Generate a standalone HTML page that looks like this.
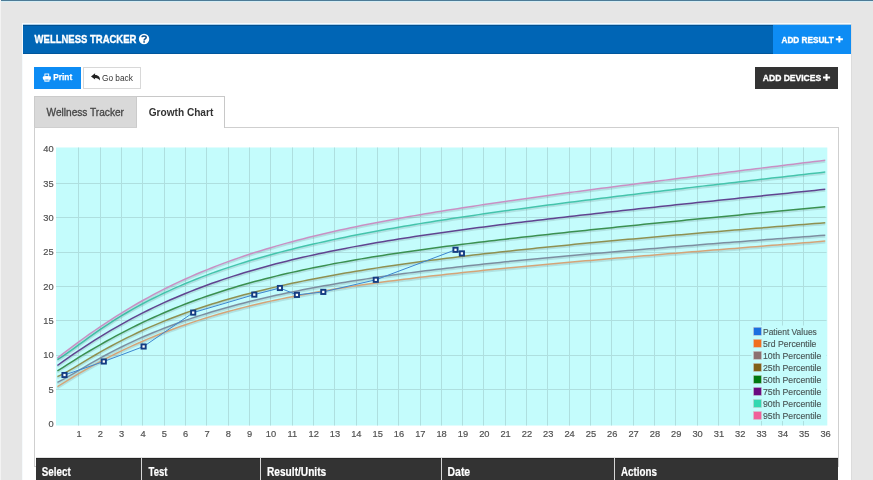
<!DOCTYPE html>
<html><head><meta charset="utf-8">
<style>
*{margin:0;padding:0;box-sizing:border-box}
html,body{width:873px;height:480px;overflow:hidden;background:#e6e6e6;font-family:"Liberation Sans",sans-serif}
.abs{position:absolute}
svg{will-change:transform}
#topline{left:0;top:0;width:873px;height:1px;background:#4d7b96}
#topline2{left:0;top:1px;width:873px;height:1px;background:#d5eef6}
#panel{left:23px;top:24px;width:828px;height:470px;background:#fff}
#hdr{left:23px;top:25px;width:828px;height:29px;background:#0065b5}
#addres{left:773px;top:25px;width:78px;height:29px;background:#0d8cf4}
.t{position:absolute;white-space:nowrap;line-height:1}
.btn{position:absolute}
#print{left:34px;top:67px;width:47px;height:22px;background:#0d8cf4}
#goback{left:83px;top:67px;width:58px;height:22px;background:#fff;border:1px solid #d8d8d8}
#adddev{left:755px;top:67px;width:83px;height:22px;background:#333}
#tab1{left:34px;top:96px;width:103px;height:31px;background:#d9d9d9;border:1px solid #cbcbcb;border-bottom:none}
#tab2{left:137px;top:96px;width:88px;height:32px;background:#fff;border:1px solid #c8c8c8;border-bottom:none;border-left:none}
#box{left:34px;top:127px;width:805px;height:340px;border:1px solid #cfcfcf;background:#fff}
#thead{left:36px;top:458px;width:802px;height:30px;background:#333}
.sep{position:absolute;top:458px;width:1px;height:22px;background:#d6d6d6}
</style></head><body>
<div class="abs" id="topline"></div><div class="abs" id="topline2"></div>
<div class="abs" style="left:0;top:0;width:1px;height:480px;background:#f3f3f3"></div>
<div class="abs" style="left:22px;top:23px;width:829px;height:458px;background:#f6fafc"></div>
<div class="abs" style="left:851px;top:24px;width:1px;height:456px;background:#dcdcdc"></div>
<div class="abs" id="panel"></div>
<div class="abs" id="hdr"></div>
<div class="abs" id="addres"></div>
<div class="abs" style="left:23px;top:24px;width:828px;height:1px;background:#a8cdea"></div>
<div class="abs" style="left:23px;top:25px;width:750px;height:1px;background:#004f90"></div>
<div class="abs" style="left:23px;top:53px;width:750px;height:1px;background:#00569c"></div>
<div class="btn" id="print"></div>
<div class="btn" id="goback"></div>
<div class="btn" id="adddev"></div>
<div class="abs" id="box"></div>
<div class="abs" id="tab1"></div>
<div class="abs" id="tab2"></div>
<svg class="abs" style="left:0;top:0" width="873" height="480">
<rect x="56" y="147.5" width="771.3" height="278" fill="#c4fcfc"/>
<path d="M78.50 147.5V425.5 M100.50 147.5V425.5 M121.50 147.5V425.5 M142.50 147.5V425.5 M164.50 147.5V425.5 M185.50 147.5V425.5 M206.50 147.5V425.5 M228.50 147.5V425.5 M249.50 147.5V425.5 M270.50 147.5V425.5 M292.50 147.5V425.5 M313.50 147.5V425.5 M334.50 147.5V425.5 M356.50 147.5V425.5 M377.50 147.5V425.5 M398.50 147.5V425.5 M420.50 147.5V425.5 M441.50 147.5V425.5 M462.50 147.5V425.5 M483.50 147.5V425.5 M505.50 147.5V425.5 M526.50 147.5V425.5 M547.50 147.5V425.5 M569.50 147.5V425.5 M590.50 147.5V425.5 M611.50 147.5V425.5 M633.50 147.5V425.5 M654.50 147.5V425.5 M675.50 147.5V425.5 M697.50 147.5V425.5 M718.50 147.5V425.5 M739.50 147.5V425.5 M761.50 147.5V425.5 M782.50 147.5V425.5 M803.50 147.5V425.5 M56 389.50H826.5 M56 355.50H826.5 M56 320.50H826.5 M56 286.50H826.5 M56 252.50H826.5 M56 217.50H826.5 M56 183.50H826.5" stroke="#aedfdf" stroke-width="1" fill="none"/>
<path d="M57.40 386.67 L62.73 383.33 L68.06 380.05 L73.40 376.83 L78.73 373.68 L84.06 370.59 L89.39 367.58 L94.73 364.63 L100.06 361.75 L105.39 358.94 L110.72 356.20 L116.06 353.53 L121.39 350.93 L126.72 348.40 L132.06 345.93 L137.39 343.53 L142.72 341.19 L148.05 338.91 L153.38 336.70 L158.72 334.55 L164.05 332.47 L169.38 330.44 L174.72 328.46 L180.05 326.55 L185.38 324.68 L190.71 322.87 L196.04 321.12 L201.38 319.41 L206.71 317.75 L212.04 316.14 L217.38 314.57 L222.71 313.05 L228.04 311.58 L233.37 310.14 L238.70 308.74 L244.04 307.39 L249.37 306.07 L254.70 304.78 L260.03 303.54 L265.37 302.32 L270.70 301.14 L276.03 299.99 L281.36 298.87 L286.70 297.78 L292.03 296.72 L297.36 295.68 L302.69 294.67 L308.03 293.69 L313.36 292.73 L318.69 291.79 L324.02 290.88 L329.36 289.99 L334.69 289.11 L340.02 288.26 L345.35 287.43 L350.69 286.61 L356.02 285.81 L361.35 285.03 L366.68 284.26 L372.02 283.51 L377.35 282.78 L382.68 282.05 L388.01 281.35 L393.35 280.65 L398.68 279.97 L404.01 279.30 L409.34 278.64 L414.68 277.99 L420.01 277.35 L425.34 276.72 L430.67 276.10 L436.01 275.49 L441.34 274.89 L446.67 274.30 L452.00 273.71 L457.34 273.14 L462.67 272.57 L468.00 272.00 L473.33 271.45 L478.67 270.90 L484.00 270.35 L489.33 269.81 L494.66 269.28 L500.00 268.75 L505.33 268.23 L510.66 267.71 L516.00 267.20 L521.33 266.69 L526.66 266.19 L531.99 265.69 L537.32 265.19 L542.66 264.70 L547.99 264.21 L553.32 263.72 L558.65 263.24 L563.99 262.76 L569.32 262.28 L574.65 261.81 L579.98 261.34 L585.32 260.87 L590.65 260.40 L595.98 259.94 L601.31 259.47 L606.65 259.01 L611.98 258.55 L617.31 258.10 L622.64 257.64 L627.98 257.19 L633.31 256.74 L638.64 256.29 L643.97 255.84 L649.31 255.39 L654.64 254.95 L659.97 254.50 L665.30 254.06 L670.64 253.62 L675.97 253.17 L681.30 252.73 L686.63 252.29 L691.97 251.86 L697.30 251.42 L702.63 250.98 L707.96 250.55 L713.30 250.11 L718.63 249.68 L723.96 249.24 L729.29 248.81 L734.63 248.38 L739.96 247.95 L745.29 247.52 L750.62 247.09 L755.96 246.66 L761.29 246.23 L766.62 245.80 L771.95 245.37 L777.29 244.94 L782.62 244.51 L787.95 244.09 L793.28 243.66 L798.62 243.23 L803.95 242.81 L809.28 242.38 L814.61 241.96 L819.95 241.53 L825.28 241.11" stroke="rgba(0,0,0,0.1)" stroke-width="2" fill="none" transform="translate(0,1.5)"/>
<path d="M57.40 386.67 L62.73 383.33 L68.06 380.05 L73.40 376.83 L78.73 373.68 L84.06 370.59 L89.39 367.58 L94.73 364.63 L100.06 361.75 L105.39 358.94 L110.72 356.20 L116.06 353.53 L121.39 350.93 L126.72 348.40 L132.06 345.93 L137.39 343.53 L142.72 341.19 L148.05 338.91 L153.38 336.70 L158.72 334.55 L164.05 332.47 L169.38 330.44 L174.72 328.46 L180.05 326.55 L185.38 324.68 L190.71 322.87 L196.04 321.12 L201.38 319.41 L206.71 317.75 L212.04 316.14 L217.38 314.57 L222.71 313.05 L228.04 311.58 L233.37 310.14 L238.70 308.74 L244.04 307.39 L249.37 306.07 L254.70 304.78 L260.03 303.54 L265.37 302.32 L270.70 301.14 L276.03 299.99 L281.36 298.87 L286.70 297.78 L292.03 296.72 L297.36 295.68 L302.69 294.67 L308.03 293.69 L313.36 292.73 L318.69 291.79 L324.02 290.88 L329.36 289.99 L334.69 289.11 L340.02 288.26 L345.35 287.43 L350.69 286.61 L356.02 285.81 L361.35 285.03 L366.68 284.26 L372.02 283.51 L377.35 282.78 L382.68 282.05 L388.01 281.35 L393.35 280.65 L398.68 279.97 L404.01 279.30 L409.34 278.64 L414.68 277.99 L420.01 277.35 L425.34 276.72 L430.67 276.10 L436.01 275.49 L441.34 274.89 L446.67 274.30 L452.00 273.71 L457.34 273.14 L462.67 272.57 L468.00 272.00 L473.33 271.45 L478.67 270.90 L484.00 270.35 L489.33 269.81 L494.66 269.28 L500.00 268.75 L505.33 268.23 L510.66 267.71 L516.00 267.20 L521.33 266.69 L526.66 266.19 L531.99 265.69 L537.32 265.19 L542.66 264.70 L547.99 264.21 L553.32 263.72 L558.65 263.24 L563.99 262.76 L569.32 262.28 L574.65 261.81 L579.98 261.34 L585.32 260.87 L590.65 260.40 L595.98 259.94 L601.31 259.47 L606.65 259.01 L611.98 258.55 L617.31 258.10 L622.64 257.64 L627.98 257.19 L633.31 256.74 L638.64 256.29 L643.97 255.84 L649.31 255.39 L654.64 254.95 L659.97 254.50 L665.30 254.06 L670.64 253.62 L675.97 253.17 L681.30 252.73 L686.63 252.29 L691.97 251.86 L697.30 251.42 L702.63 250.98 L707.96 250.55 L713.30 250.11 L718.63 249.68 L723.96 249.24 L729.29 248.81 L734.63 248.38 L739.96 247.95 L745.29 247.52 L750.62 247.09 L755.96 246.66 L761.29 246.23 L766.62 245.80 L771.95 245.37 L777.29 244.94 L782.62 244.51 L787.95 244.09 L793.28 243.66 L798.62 243.23 L803.95 242.81 L809.28 242.38 L814.61 241.96 L819.95 241.53 L825.28 241.11" stroke="#d4a478" stroke-width="1.5" fill="none"/>
<path d="M57.40 382.31 L62.73 379.61 L68.06 376.66 L73.40 373.58 L78.73 370.44 L84.06 367.31 L89.39 364.20 L94.73 361.15 L100.06 358.17 L105.39 355.26 L110.72 352.43 L116.06 349.67 L121.39 347.00 L126.72 344.40 L132.06 341.88 L137.39 339.43 L142.72 337.06 L148.05 334.76 L153.38 332.52 L158.72 330.35 L164.05 328.24 L169.38 326.20 L174.72 324.21 L180.05 322.29 L185.38 320.41 L190.71 318.59 L196.04 316.82 L201.38 315.10 L206.71 313.43 L212.04 311.81 L217.38 310.23 L222.71 308.69 L228.04 307.19 L233.37 305.73 L238.70 304.32 L244.04 302.93 L249.37 301.59 L254.70 300.28 L260.03 299.00 L265.37 297.75 L270.70 296.54 L276.03 295.35 L281.36 294.20 L286.70 293.07 L292.03 291.97 L297.36 290.89 L302.69 289.84 L308.03 288.81 L313.36 287.81 L318.69 286.82 L324.02 285.86 L329.36 284.92 L334.69 284.01 L340.02 283.11 L345.35 282.22 L350.69 281.36 L356.02 280.51 L361.35 279.68 L366.68 278.87 L372.02 278.07 L377.35 277.29 L382.68 276.52 L388.01 275.77 L393.35 275.03 L398.68 274.30 L404.01 273.58 L409.34 272.88 L414.68 272.19 L420.01 271.51 L425.34 270.84 L430.67 270.18 L436.01 269.53 L441.34 268.89 L446.67 268.26 L452.00 267.64 L457.34 267.03 L462.67 266.42 L468.00 265.83 L473.33 265.24 L478.67 264.66 L484.00 264.09 L489.33 263.52 L494.66 262.96 L500.00 262.41 L505.33 261.86 L510.66 261.32 L516.00 260.79 L521.33 260.26 L526.66 259.73 L531.99 259.22 L537.32 258.70 L542.66 258.19 L547.99 257.69 L553.32 257.19 L558.65 256.70 L563.99 256.21 L569.32 255.72 L574.65 255.24 L579.98 254.76 L585.32 254.28 L590.65 253.81 L595.98 253.34 L601.31 252.88 L606.65 252.42 L611.98 251.96 L617.31 251.50 L622.64 251.05 L627.98 250.60 L633.31 250.15 L638.64 249.71 L643.97 249.27 L649.31 248.83 L654.64 248.39 L659.97 247.95 L665.30 247.52 L670.64 247.09 L675.97 246.66 L681.30 246.23 L686.63 245.81 L691.97 245.38 L697.30 244.96 L702.63 244.54 L707.96 244.12 L713.30 243.70 L718.63 243.29 L723.96 242.87 L729.29 242.46 L734.63 242.05 L739.96 241.64 L745.29 241.23 L750.62 240.82 L755.96 240.41 L761.29 240.01 L766.62 239.60 L771.95 239.20 L777.29 238.80 L782.62 238.40 L787.95 237.99 L793.28 237.59 L798.62 237.20 L803.95 236.80 L809.28 236.40 L814.61 236.00 L819.95 235.61 L825.28 235.21" stroke="rgba(0,0,0,0.1)" stroke-width="2" fill="none" transform="translate(0,1.5)"/>
<path d="M57.40 382.31 L62.73 379.61 L68.06 376.66 L73.40 373.58 L78.73 370.44 L84.06 367.31 L89.39 364.20 L94.73 361.15 L100.06 358.17 L105.39 355.26 L110.72 352.43 L116.06 349.67 L121.39 347.00 L126.72 344.40 L132.06 341.88 L137.39 339.43 L142.72 337.06 L148.05 334.76 L153.38 332.52 L158.72 330.35 L164.05 328.24 L169.38 326.20 L174.72 324.21 L180.05 322.29 L185.38 320.41 L190.71 318.59 L196.04 316.82 L201.38 315.10 L206.71 313.43 L212.04 311.81 L217.38 310.23 L222.71 308.69 L228.04 307.19 L233.37 305.73 L238.70 304.32 L244.04 302.93 L249.37 301.59 L254.70 300.28 L260.03 299.00 L265.37 297.75 L270.70 296.54 L276.03 295.35 L281.36 294.20 L286.70 293.07 L292.03 291.97 L297.36 290.89 L302.69 289.84 L308.03 288.81 L313.36 287.81 L318.69 286.82 L324.02 285.86 L329.36 284.92 L334.69 284.01 L340.02 283.11 L345.35 282.22 L350.69 281.36 L356.02 280.51 L361.35 279.68 L366.68 278.87 L372.02 278.07 L377.35 277.29 L382.68 276.52 L388.01 275.77 L393.35 275.03 L398.68 274.30 L404.01 273.58 L409.34 272.88 L414.68 272.19 L420.01 271.51 L425.34 270.84 L430.67 270.18 L436.01 269.53 L441.34 268.89 L446.67 268.26 L452.00 267.64 L457.34 267.03 L462.67 266.42 L468.00 265.83 L473.33 265.24 L478.67 264.66 L484.00 264.09 L489.33 263.52 L494.66 262.96 L500.00 262.41 L505.33 261.86 L510.66 261.32 L516.00 260.79 L521.33 260.26 L526.66 259.73 L531.99 259.22 L537.32 258.70 L542.66 258.19 L547.99 257.69 L553.32 257.19 L558.65 256.70 L563.99 256.21 L569.32 255.72 L574.65 255.24 L579.98 254.76 L585.32 254.28 L590.65 253.81 L595.98 253.34 L601.31 252.88 L606.65 252.42 L611.98 251.96 L617.31 251.50 L622.64 251.05 L627.98 250.60 L633.31 250.15 L638.64 249.71 L643.97 249.27 L649.31 248.83 L654.64 248.39 L659.97 247.95 L665.30 247.52 L670.64 247.09 L675.97 246.66 L681.30 246.23 L686.63 245.81 L691.97 245.38 L697.30 244.96 L702.63 244.54 L707.96 244.12 L713.30 243.70 L718.63 243.29 L723.96 242.87 L729.29 242.46 L734.63 242.05 L739.96 241.64 L745.29 241.23 L750.62 240.82 L755.96 240.41 L761.29 240.01 L766.62 239.60 L771.95 239.20 L777.29 238.80 L782.62 238.40 L787.95 237.99 L793.28 237.59 L798.62 237.20 L803.95 236.80 L809.28 236.40 L814.61 236.00 L819.95 235.61 L825.28 235.21" stroke="#7c8ea0" stroke-width="1.5" fill="none"/>
<path d="M57.40 376.67 L62.73 374.10 L68.06 371.16 L73.40 368.04 L78.73 364.83 L84.06 361.60 L89.39 358.40 L94.73 355.25 L100.06 352.16 L105.39 349.15 L110.72 346.22 L116.06 343.37 L121.39 340.60 L126.72 337.91 L132.06 335.30 L137.39 332.76 L142.72 330.30 L148.05 327.92 L153.38 325.60 L158.72 323.35 L164.05 321.16 L169.38 319.04 L174.72 316.98 L180.05 314.98 L185.38 313.03 L190.71 311.14 L196.04 309.30 L201.38 307.51 L206.71 305.77 L212.04 304.08 L217.38 302.43 L222.71 300.83 L228.04 299.27 L233.37 297.75 L238.70 296.26 L244.04 294.82 L249.37 293.42 L254.70 292.05 L260.03 290.71 L265.37 289.41 L270.70 288.13 L276.03 286.89 L281.36 285.68 L286.70 284.50 L292.03 283.34 L297.36 282.21 L302.69 281.11 L308.03 280.03 L313.36 278.97 L318.69 277.94 L324.02 276.93 L329.36 275.94 L334.69 274.97 L340.02 274.03 L345.35 273.10 L350.69 272.18 L356.02 271.29 L361.35 270.42 L366.68 269.56 L372.02 268.71 L377.35 267.88 L382.68 267.07 L388.01 266.27 L393.35 265.49 L398.68 264.72 L404.01 263.96 L409.34 263.21 L414.68 262.48 L420.01 261.75 L425.34 261.04 L430.67 260.34 L436.01 259.65 L441.34 258.97 L446.67 258.30 L452.00 257.64 L457.34 256.99 L462.67 256.34 L468.00 255.71 L473.33 255.08 L478.67 254.46 L484.00 253.85 L489.33 253.24 L494.66 252.64 L500.00 252.05 L505.33 251.47 L510.66 250.89 L516.00 250.31 L521.33 249.75 L526.66 249.19 L531.99 248.63 L537.32 248.08 L542.66 247.53 L547.99 246.99 L553.32 246.46 L558.65 245.93 L563.99 245.40 L569.32 244.88 L574.65 244.36 L579.98 243.84 L585.32 243.33 L590.65 242.82 L595.98 242.32 L601.31 241.82 L606.65 241.32 L611.98 240.83 L617.31 240.34 L622.64 239.85 L627.98 239.36 L633.31 238.88 L638.64 238.40 L643.97 237.92 L649.31 237.45 L654.64 236.97 L659.97 236.50 L665.30 236.03 L670.64 235.57 L675.97 235.10 L681.30 234.64 L686.63 234.18 L691.97 233.72 L697.30 233.27 L702.63 232.81 L707.96 232.36 L713.30 231.91 L718.63 231.46 L723.96 231.01 L729.29 230.56 L734.63 230.11 L739.96 229.67 L745.29 229.22 L750.62 228.78 L755.96 228.34 L761.29 227.90 L766.62 227.46 L771.95 227.03 L777.29 226.59 L782.62 226.15 L787.95 225.72 L793.28 225.28 L798.62 224.85 L803.95 224.42 L809.28 223.99 L814.61 223.56 L819.95 223.13 L825.28 222.70" stroke="rgba(0,0,0,0.1)" stroke-width="2" fill="none" transform="translate(0,1.5)"/>
<path d="M57.40 376.67 L62.73 374.10 L68.06 371.16 L73.40 368.04 L78.73 364.83 L84.06 361.60 L89.39 358.40 L94.73 355.25 L100.06 352.16 L105.39 349.15 L110.72 346.22 L116.06 343.37 L121.39 340.60 L126.72 337.91 L132.06 335.30 L137.39 332.76 L142.72 330.30 L148.05 327.92 L153.38 325.60 L158.72 323.35 L164.05 321.16 L169.38 319.04 L174.72 316.98 L180.05 314.98 L185.38 313.03 L190.71 311.14 L196.04 309.30 L201.38 307.51 L206.71 305.77 L212.04 304.08 L217.38 302.43 L222.71 300.83 L228.04 299.27 L233.37 297.75 L238.70 296.26 L244.04 294.82 L249.37 293.42 L254.70 292.05 L260.03 290.71 L265.37 289.41 L270.70 288.13 L276.03 286.89 L281.36 285.68 L286.70 284.50 L292.03 283.34 L297.36 282.21 L302.69 281.11 L308.03 280.03 L313.36 278.97 L318.69 277.94 L324.02 276.93 L329.36 275.94 L334.69 274.97 L340.02 274.03 L345.35 273.10 L350.69 272.18 L356.02 271.29 L361.35 270.42 L366.68 269.56 L372.02 268.71 L377.35 267.88 L382.68 267.07 L388.01 266.27 L393.35 265.49 L398.68 264.72 L404.01 263.96 L409.34 263.21 L414.68 262.48 L420.01 261.75 L425.34 261.04 L430.67 260.34 L436.01 259.65 L441.34 258.97 L446.67 258.30 L452.00 257.64 L457.34 256.99 L462.67 256.34 L468.00 255.71 L473.33 255.08 L478.67 254.46 L484.00 253.85 L489.33 253.24 L494.66 252.64 L500.00 252.05 L505.33 251.47 L510.66 250.89 L516.00 250.31 L521.33 249.75 L526.66 249.19 L531.99 248.63 L537.32 248.08 L542.66 247.53 L547.99 246.99 L553.32 246.46 L558.65 245.93 L563.99 245.40 L569.32 244.88 L574.65 244.36 L579.98 243.84 L585.32 243.33 L590.65 242.82 L595.98 242.32 L601.31 241.82 L606.65 241.32 L611.98 240.83 L617.31 240.34 L622.64 239.85 L627.98 239.36 L633.31 238.88 L638.64 238.40 L643.97 237.92 L649.31 237.45 L654.64 236.97 L659.97 236.50 L665.30 236.03 L670.64 235.57 L675.97 235.10 L681.30 234.64 L686.63 234.18 L691.97 233.72 L697.30 233.27 L702.63 232.81 L707.96 232.36 L713.30 231.91 L718.63 231.46 L723.96 231.01 L729.29 230.56 L734.63 230.11 L739.96 229.67 L745.29 229.22 L750.62 228.78 L755.96 228.34 L761.29 227.90 L766.62 227.46 L771.95 227.03 L777.29 226.59 L782.62 226.15 L787.95 225.72 L793.28 225.28 L798.62 224.85 L803.95 224.42 L809.28 223.99 L814.61 223.56 L819.95 223.13 L825.28 222.70" stroke="#8e9050" stroke-width="1.5" fill="none"/>
<path d="M57.40 370.98 L62.73 367.53 L68.06 364.13 L73.40 360.78 L78.73 357.47 L84.06 354.21 L89.39 351.01 L94.73 347.87 L100.06 344.78 L105.39 341.76 L110.72 338.80 L116.06 335.91 L121.39 333.07 L126.72 330.31 L132.06 327.61 L137.39 324.97 L142.72 322.40 L148.05 319.89 L153.38 317.45 L158.72 315.07 L164.05 312.75 L169.38 310.49 L174.72 308.29 L180.05 306.15 L185.38 304.06 L190.71 302.03 L196.04 300.06 L201.38 298.14 L206.71 296.28 L212.04 294.46 L217.38 292.69 L222.71 290.97 L228.04 289.30 L233.37 287.67 L238.70 286.09 L244.04 284.55 L249.37 283.05 L254.70 281.59 L260.03 280.16 L265.37 278.78 L270.70 277.43 L276.03 276.11 L281.36 274.83 L286.70 273.58 L292.03 272.37 L297.36 271.18 L302.69 270.02 L308.03 268.89 L313.36 267.78 L318.69 266.70 L324.02 265.65 L329.36 264.62 L334.69 263.61 L340.02 262.62 L345.35 261.66 L350.69 260.71 L356.02 259.78 L361.35 258.88 L366.68 257.99 L372.02 257.11 L377.35 256.26 L382.68 255.42 L388.01 254.59 L393.35 253.78 L398.68 252.98 L404.01 252.20 L409.34 251.43 L414.68 250.67 L420.01 249.92 L425.34 249.18 L430.67 248.46 L436.01 247.74 L441.34 247.03 L446.67 246.34 L452.00 245.65 L457.34 244.97 L462.67 244.29 L468.00 243.63 L473.33 242.97 L478.67 242.32 L484.00 241.68 L489.33 241.04 L494.66 240.41 L500.00 239.79 L505.33 239.17 L510.66 238.55 L516.00 237.94 L521.33 237.34 L526.66 236.74 L531.99 236.15 L537.32 235.55 L542.66 234.97 L547.99 234.38 L553.32 233.80 L558.65 233.23 L563.99 232.66 L569.32 232.09 L574.65 231.52 L579.98 230.96 L585.32 230.40 L590.65 229.84 L595.98 229.28 L601.31 228.73 L606.65 228.18 L611.98 227.63 L617.31 227.08 L622.64 226.53 L627.98 225.99 L633.31 225.45 L638.64 224.91 L643.97 224.37 L649.31 223.83 L654.64 223.30 L659.97 222.76 L665.30 222.23 L670.64 221.70 L675.97 221.17 L681.30 220.64 L686.63 220.11 L691.97 219.59 L697.30 219.06 L702.63 218.53 L707.96 218.01 L713.30 217.49 L718.63 216.96 L723.96 216.44 L729.29 215.92 L734.63 215.40 L739.96 214.88 L745.29 214.36 L750.62 213.84 L755.96 213.32 L761.29 212.81 L766.62 212.29 L771.95 211.77 L777.29 211.25 L782.62 210.74 L787.95 210.22 L793.28 209.71 L798.62 209.19 L803.95 208.68 L809.28 208.17 L814.61 207.65 L819.95 207.14 L825.28 206.63" stroke="rgba(0,0,0,0.1)" stroke-width="2" fill="none" transform="translate(0,1.5)"/>
<path d="M57.40 370.98 L62.73 367.53 L68.06 364.13 L73.40 360.78 L78.73 357.47 L84.06 354.21 L89.39 351.01 L94.73 347.87 L100.06 344.78 L105.39 341.76 L110.72 338.80 L116.06 335.91 L121.39 333.07 L126.72 330.31 L132.06 327.61 L137.39 324.97 L142.72 322.40 L148.05 319.89 L153.38 317.45 L158.72 315.07 L164.05 312.75 L169.38 310.49 L174.72 308.29 L180.05 306.15 L185.38 304.06 L190.71 302.03 L196.04 300.06 L201.38 298.14 L206.71 296.28 L212.04 294.46 L217.38 292.69 L222.71 290.97 L228.04 289.30 L233.37 287.67 L238.70 286.09 L244.04 284.55 L249.37 283.05 L254.70 281.59 L260.03 280.16 L265.37 278.78 L270.70 277.43 L276.03 276.11 L281.36 274.83 L286.70 273.58 L292.03 272.37 L297.36 271.18 L302.69 270.02 L308.03 268.89 L313.36 267.78 L318.69 266.70 L324.02 265.65 L329.36 264.62 L334.69 263.61 L340.02 262.62 L345.35 261.66 L350.69 260.71 L356.02 259.78 L361.35 258.88 L366.68 257.99 L372.02 257.11 L377.35 256.26 L382.68 255.42 L388.01 254.59 L393.35 253.78 L398.68 252.98 L404.01 252.20 L409.34 251.43 L414.68 250.67 L420.01 249.92 L425.34 249.18 L430.67 248.46 L436.01 247.74 L441.34 247.03 L446.67 246.34 L452.00 245.65 L457.34 244.97 L462.67 244.29 L468.00 243.63 L473.33 242.97 L478.67 242.32 L484.00 241.68 L489.33 241.04 L494.66 240.41 L500.00 239.79 L505.33 239.17 L510.66 238.55 L516.00 237.94 L521.33 237.34 L526.66 236.74 L531.99 236.15 L537.32 235.55 L542.66 234.97 L547.99 234.38 L553.32 233.80 L558.65 233.23 L563.99 232.66 L569.32 232.09 L574.65 231.52 L579.98 230.96 L585.32 230.40 L590.65 229.84 L595.98 229.28 L601.31 228.73 L606.65 228.18 L611.98 227.63 L617.31 227.08 L622.64 226.53 L627.98 225.99 L633.31 225.45 L638.64 224.91 L643.97 224.37 L649.31 223.83 L654.64 223.30 L659.97 222.76 L665.30 222.23 L670.64 221.70 L675.97 221.17 L681.30 220.64 L686.63 220.11 L691.97 219.59 L697.30 219.06 L702.63 218.53 L707.96 218.01 L713.30 217.49 L718.63 216.96 L723.96 216.44 L729.29 215.92 L734.63 215.40 L739.96 214.88 L745.29 214.36 L750.62 213.84 L755.96 213.32 L761.29 212.81 L766.62 212.29 L771.95 211.77 L777.29 211.25 L782.62 210.74 L787.95 210.22 L793.28 209.71 L798.62 209.19 L803.95 208.68 L809.28 208.17 L814.61 207.65 L819.95 207.14 L825.28 206.63" stroke="#3a9050" stroke-width="1.5" fill="none"/>
<path d="M57.40 365.50 L62.73 361.68 L68.06 357.91 L73.40 354.22 L78.73 350.60 L84.06 347.05 L89.39 343.57 L94.73 340.17 L100.06 336.84 L105.39 333.59 L110.72 330.42 L116.06 327.32 L121.39 324.29 L126.72 321.34 L132.06 318.46 L137.39 315.66 L142.72 312.92 L148.05 310.26 L153.38 307.67 L158.72 305.14 L164.05 302.68 L169.38 300.29 L174.72 297.96 L180.05 295.69 L185.38 293.49 L190.71 291.34 L196.04 289.25 L201.38 287.22 L206.71 285.24 L212.04 283.32 L217.38 281.45 L222.71 279.63 L228.04 277.85 L233.37 276.13 L238.70 274.45 L244.04 272.81 L249.37 271.22 L254.70 269.67 L260.03 268.16 L265.37 266.68 L270.70 265.25 L276.03 263.85 L281.36 262.48 L286.70 261.15 L292.03 259.85 L297.36 258.58 L302.69 257.34 L308.03 256.14 L313.36 254.95 L318.69 253.80 L324.02 252.67 L329.36 251.57 L334.69 250.49 L340.02 249.43 L345.35 248.39 L350.69 247.38 L356.02 246.38 L361.35 245.41 L366.68 244.45 L372.02 243.52 L377.35 242.59 L382.68 241.69 L388.01 240.80 L393.35 239.93 L398.68 239.07 L404.01 238.23 L409.34 237.39 L414.68 236.58 L420.01 235.77 L425.34 234.98 L430.67 234.19 L436.01 233.42 L441.34 232.66 L446.67 231.91 L452.00 231.17 L457.34 230.43 L462.67 229.71 L468.00 228.99 L473.33 228.28 L478.67 227.58 L484.00 226.89 L489.33 226.20 L494.66 225.52 L500.00 224.85 L505.33 224.18 L510.66 223.52 L516.00 222.86 L521.33 222.21 L526.66 221.57 L531.99 220.93 L537.32 220.29 L542.66 219.66 L547.99 219.03 L553.32 218.41 L558.65 217.79 L563.99 217.17 L569.32 216.56 L574.65 215.95 L579.98 215.35 L585.32 214.74 L590.65 214.14 L595.98 213.55 L601.31 212.95 L606.65 212.36 L611.98 211.77 L617.31 211.18 L622.64 210.60 L627.98 210.02 L633.31 209.44 L638.64 208.86 L643.97 208.28 L649.31 207.70 L654.64 207.13 L659.97 206.56 L665.30 205.99 L670.64 205.42 L675.97 204.85 L681.30 204.28 L686.63 203.72 L691.97 203.15 L697.30 202.59 L702.63 202.03 L707.96 201.47 L713.30 200.91 L718.63 200.35 L723.96 199.79 L729.29 199.23 L734.63 198.68 L739.96 198.12 L745.29 197.57 L750.62 197.01 L755.96 196.46 L761.29 195.91 L766.62 195.35 L771.95 194.80 L777.29 194.25 L782.62 193.70 L787.95 193.15 L793.28 192.60 L798.62 192.05 L803.95 191.50 L809.28 190.95 L814.61 190.41 L819.95 189.86 L825.28 189.31" stroke="rgba(0,0,0,0.1)" stroke-width="2" fill="none" transform="translate(0,1.5)"/>
<path d="M57.40 365.50 L62.73 361.68 L68.06 357.91 L73.40 354.22 L78.73 350.60 L84.06 347.05 L89.39 343.57 L94.73 340.17 L100.06 336.84 L105.39 333.59 L110.72 330.42 L116.06 327.32 L121.39 324.29 L126.72 321.34 L132.06 318.46 L137.39 315.66 L142.72 312.92 L148.05 310.26 L153.38 307.67 L158.72 305.14 L164.05 302.68 L169.38 300.29 L174.72 297.96 L180.05 295.69 L185.38 293.49 L190.71 291.34 L196.04 289.25 L201.38 287.22 L206.71 285.24 L212.04 283.32 L217.38 281.45 L222.71 279.63 L228.04 277.85 L233.37 276.13 L238.70 274.45 L244.04 272.81 L249.37 271.22 L254.70 269.67 L260.03 268.16 L265.37 266.68 L270.70 265.25 L276.03 263.85 L281.36 262.48 L286.70 261.15 L292.03 259.85 L297.36 258.58 L302.69 257.34 L308.03 256.14 L313.36 254.95 L318.69 253.80 L324.02 252.67 L329.36 251.57 L334.69 250.49 L340.02 249.43 L345.35 248.39 L350.69 247.38 L356.02 246.38 L361.35 245.41 L366.68 244.45 L372.02 243.52 L377.35 242.59 L382.68 241.69 L388.01 240.80 L393.35 239.93 L398.68 239.07 L404.01 238.23 L409.34 237.39 L414.68 236.58 L420.01 235.77 L425.34 234.98 L430.67 234.19 L436.01 233.42 L441.34 232.66 L446.67 231.91 L452.00 231.17 L457.34 230.43 L462.67 229.71 L468.00 228.99 L473.33 228.28 L478.67 227.58 L484.00 226.89 L489.33 226.20 L494.66 225.52 L500.00 224.85 L505.33 224.18 L510.66 223.52 L516.00 222.86 L521.33 222.21 L526.66 221.57 L531.99 220.93 L537.32 220.29 L542.66 219.66 L547.99 219.03 L553.32 218.41 L558.65 217.79 L563.99 217.17 L569.32 216.56 L574.65 215.95 L579.98 215.35 L585.32 214.74 L590.65 214.14 L595.98 213.55 L601.31 212.95 L606.65 212.36 L611.98 211.77 L617.31 211.18 L622.64 210.60 L627.98 210.02 L633.31 209.44 L638.64 208.86 L643.97 208.28 L649.31 207.70 L654.64 207.13 L659.97 206.56 L665.30 205.99 L670.64 205.42 L675.97 204.85 L681.30 204.28 L686.63 203.72 L691.97 203.15 L697.30 202.59 L702.63 202.03 L707.96 201.47 L713.30 200.91 L718.63 200.35 L723.96 199.79 L729.29 199.23 L734.63 198.68 L739.96 198.12 L745.29 197.57 L750.62 197.01 L755.96 196.46 L761.29 195.91 L766.62 195.35 L771.95 194.80 L777.29 194.25 L782.62 193.70 L787.95 193.15 L793.28 192.60 L798.62 192.05 L803.95 191.50 L809.28 190.95 L814.61 190.41 L819.95 189.86 L825.28 189.31" stroke="#604490" stroke-width="1.5" fill="none"/>
<path d="M57.40 359.73 L62.73 356.36 L68.06 352.68 L73.40 348.83 L78.73 344.92 L84.06 341.02 L89.39 337.17 L94.73 333.38 L100.06 329.69 L105.39 326.10 L110.72 322.60 L116.06 319.21 L121.39 315.93 L126.72 312.74 L132.06 309.66 L137.39 306.67 L142.72 303.77 L148.05 300.96 L153.38 298.24 L158.72 295.60 L164.05 293.05 L169.38 290.57 L174.72 288.16 L180.05 285.83 L185.38 283.56 L190.71 281.36 L196.04 279.22 L201.38 277.15 L206.71 275.13 L212.04 273.17 L217.38 271.26 L222.71 269.40 L228.04 267.59 L233.37 265.84 L238.70 264.12 L244.04 262.45 L249.37 260.83 L254.70 259.24 L260.03 257.70 L265.37 256.19 L270.70 254.71 L276.03 253.28 L281.36 251.87 L286.70 250.50 L292.03 249.15 L297.36 247.84 L302.69 246.56 L308.03 245.30 L313.36 244.07 L318.69 242.86 L324.02 241.68 L329.36 240.52 L334.69 239.39 L340.02 238.27 L345.35 237.18 L350.69 236.11 L356.02 235.05 L361.35 234.01 L366.68 232.99 L372.02 231.99 L377.35 231.00 L382.68 230.03 L388.01 229.08 L393.35 228.14 L398.68 227.21 L404.01 226.29 L409.34 225.39 L414.68 224.50 L420.01 223.62 L425.34 222.76 L430.67 221.90 L436.01 221.06 L441.34 220.22 L446.67 219.40 L452.00 218.58 L457.34 217.77 L462.67 216.97 L468.00 216.18 L473.33 215.40 L478.67 214.62 L484.00 213.85 L489.33 213.09 L494.66 212.34 L500.00 211.59 L505.33 210.85 L510.66 210.11 L516.00 209.38 L521.33 208.66 L526.66 207.94 L531.99 207.22 L537.32 206.51 L542.66 205.81 L547.99 205.11 L553.32 204.41 L558.65 203.72 L563.99 203.03 L569.32 202.35 L574.65 201.67 L579.98 200.99 L585.32 200.32 L590.65 199.65 L595.98 198.98 L601.31 198.32 L606.65 197.65 L611.98 197.00 L617.31 196.34 L622.64 195.69 L627.98 195.04 L633.31 194.39 L638.64 193.74 L643.97 193.10 L649.31 192.45 L654.64 191.81 L659.97 191.18 L665.30 190.54 L670.64 189.91 L675.97 189.27 L681.30 188.64 L686.63 188.01 L691.97 187.38 L697.30 186.76 L702.63 186.13 L707.96 185.51 L713.30 184.89 L718.63 184.27 L723.96 183.65 L729.29 183.03 L734.63 182.41 L739.96 181.79 L745.29 181.18 L750.62 180.56 L755.96 179.95 L761.29 179.34 L766.62 178.72 L771.95 178.11 L777.29 177.50 L782.62 176.89 L787.95 176.28 L793.28 175.68 L798.62 175.07 L803.95 174.46 L809.28 173.86 L814.61 173.25 L819.95 172.64 L825.28 172.04" stroke="rgba(0,0,0,0.1)" stroke-width="2" fill="none" transform="translate(0,1.5)"/>
<path d="M57.40 359.73 L62.73 356.36 L68.06 352.68 L73.40 348.83 L78.73 344.92 L84.06 341.02 L89.39 337.17 L94.73 333.38 L100.06 329.69 L105.39 326.10 L110.72 322.60 L116.06 319.21 L121.39 315.93 L126.72 312.74 L132.06 309.66 L137.39 306.67 L142.72 303.77 L148.05 300.96 L153.38 298.24 L158.72 295.60 L164.05 293.05 L169.38 290.57 L174.72 288.16 L180.05 285.83 L185.38 283.56 L190.71 281.36 L196.04 279.22 L201.38 277.15 L206.71 275.13 L212.04 273.17 L217.38 271.26 L222.71 269.40 L228.04 267.59 L233.37 265.84 L238.70 264.12 L244.04 262.45 L249.37 260.83 L254.70 259.24 L260.03 257.70 L265.37 256.19 L270.70 254.71 L276.03 253.28 L281.36 251.87 L286.70 250.50 L292.03 249.15 L297.36 247.84 L302.69 246.56 L308.03 245.30 L313.36 244.07 L318.69 242.86 L324.02 241.68 L329.36 240.52 L334.69 239.39 L340.02 238.27 L345.35 237.18 L350.69 236.11 L356.02 235.05 L361.35 234.01 L366.68 232.99 L372.02 231.99 L377.35 231.00 L382.68 230.03 L388.01 229.08 L393.35 228.14 L398.68 227.21 L404.01 226.29 L409.34 225.39 L414.68 224.50 L420.01 223.62 L425.34 222.76 L430.67 221.90 L436.01 221.06 L441.34 220.22 L446.67 219.40 L452.00 218.58 L457.34 217.77 L462.67 216.97 L468.00 216.18 L473.33 215.40 L478.67 214.62 L484.00 213.85 L489.33 213.09 L494.66 212.34 L500.00 211.59 L505.33 210.85 L510.66 210.11 L516.00 209.38 L521.33 208.66 L526.66 207.94 L531.99 207.22 L537.32 206.51 L542.66 205.81 L547.99 205.11 L553.32 204.41 L558.65 203.72 L563.99 203.03 L569.32 202.35 L574.65 201.67 L579.98 200.99 L585.32 200.32 L590.65 199.65 L595.98 198.98 L601.31 198.32 L606.65 197.65 L611.98 197.00 L617.31 196.34 L622.64 195.69 L627.98 195.04 L633.31 194.39 L638.64 193.74 L643.97 193.10 L649.31 192.45 L654.64 191.81 L659.97 191.18 L665.30 190.54 L670.64 189.91 L675.97 189.27 L681.30 188.64 L686.63 188.01 L691.97 187.38 L697.30 186.76 L702.63 186.13 L707.96 185.51 L713.30 184.89 L718.63 184.27 L723.96 183.65 L729.29 183.03 L734.63 182.41 L739.96 181.79 L745.29 181.18 L750.62 180.56 L755.96 179.95 L761.29 179.34 L766.62 178.72 L771.95 178.11 L777.29 177.50 L782.62 176.89 L787.95 176.28 L793.28 175.68 L798.62 175.07 L803.95 174.46 L809.28 173.86 L814.61 173.25 L819.95 172.64 L825.28 172.04" stroke="#44c4ac" stroke-width="1.5" fill="none"/>
<path d="M57.40 357.99 L62.73 353.87 L68.06 349.81 L73.40 345.81 L78.73 341.88 L84.06 338.01 L89.39 334.22 L94.73 330.50 L100.06 326.85 L105.39 323.28 L110.72 319.79 L116.06 316.38 L121.39 313.05 L126.72 309.79 L132.06 306.61 L137.39 303.52 L142.72 300.49 L148.05 297.55 L153.38 294.68 L158.72 291.89 L164.05 289.16 L169.38 286.52 L174.72 283.94 L180.05 281.43 L185.38 278.98 L190.71 276.60 L196.04 274.29 L201.38 272.04 L206.71 269.85 L212.04 267.72 L217.38 265.64 L222.71 263.62 L228.04 261.66 L233.37 259.75 L238.70 257.88 L244.04 256.07 L249.37 254.30 L254.70 252.58 L260.03 250.91 L265.37 249.27 L270.70 247.68 L276.03 246.12 L281.36 244.61 L286.70 243.13 L292.03 241.69 L297.36 240.28 L302.69 238.90 L308.03 237.55 L313.36 236.24 L318.69 234.95 L324.02 233.69 L329.36 232.46 L334.69 231.26 L340.02 230.08 L345.35 228.92 L350.69 227.78 L356.02 226.67 L361.35 225.58 L366.68 224.51 L372.02 223.45 L377.35 222.42 L382.68 221.40 L388.01 220.40 L393.35 219.42 L398.68 218.45 L404.01 217.49 L409.34 216.55 L414.68 215.63 L420.01 214.71 L425.34 213.81 L430.67 212.92 L436.01 212.05 L441.34 211.18 L446.67 210.32 L452.00 209.47 L457.34 208.64 L462.67 207.81 L468.00 206.99 L473.33 206.17 L478.67 205.37 L484.00 204.57 L489.33 203.78 L494.66 203.00 L500.00 202.22 L505.33 201.45 L510.66 200.68 L516.00 199.92 L521.33 199.17 L526.66 198.42 L531.99 197.68 L537.32 196.94 L542.66 196.20 L547.99 195.47 L553.32 194.74 L558.65 194.02 L563.99 193.30 L569.32 192.58 L574.65 191.87 L579.98 191.16 L585.32 190.45 L590.65 189.75 L595.98 189.05 L601.31 188.35 L606.65 187.65 L611.98 186.96 L617.31 186.27 L622.64 185.58 L627.98 184.89 L633.31 184.20 L638.64 183.52 L643.97 182.84 L649.31 182.16 L654.64 181.48 L659.97 180.80 L665.30 180.12 L670.64 179.45 L675.97 178.78 L681.30 178.10 L686.63 177.43 L691.97 176.76 L697.30 176.09 L702.63 175.42 L707.96 174.76 L713.30 174.09 L718.63 173.43 L723.96 172.76 L729.29 172.10 L734.63 171.43 L739.96 170.77 L745.29 170.11 L750.62 169.45 L755.96 168.79 L761.29 168.13 L766.62 167.47 L771.95 166.81 L777.29 166.15 L782.62 165.49 L787.95 164.84 L793.28 164.18 L798.62 163.52 L803.95 162.86 L809.28 162.21 L814.61 161.55 L819.95 160.90 L825.28 160.24" stroke="rgba(0,0,0,0.1)" stroke-width="2" fill="none" transform="translate(0,1.5)"/>
<path d="M57.40 357.99 L62.73 353.87 L68.06 349.81 L73.40 345.81 L78.73 341.88 L84.06 338.01 L89.39 334.22 L94.73 330.50 L100.06 326.85 L105.39 323.28 L110.72 319.79 L116.06 316.38 L121.39 313.05 L126.72 309.79 L132.06 306.61 L137.39 303.52 L142.72 300.49 L148.05 297.55 L153.38 294.68 L158.72 291.89 L164.05 289.16 L169.38 286.52 L174.72 283.94 L180.05 281.43 L185.38 278.98 L190.71 276.60 L196.04 274.29 L201.38 272.04 L206.71 269.85 L212.04 267.72 L217.38 265.64 L222.71 263.62 L228.04 261.66 L233.37 259.75 L238.70 257.88 L244.04 256.07 L249.37 254.30 L254.70 252.58 L260.03 250.91 L265.37 249.27 L270.70 247.68 L276.03 246.12 L281.36 244.61 L286.70 243.13 L292.03 241.69 L297.36 240.28 L302.69 238.90 L308.03 237.55 L313.36 236.24 L318.69 234.95 L324.02 233.69 L329.36 232.46 L334.69 231.26 L340.02 230.08 L345.35 228.92 L350.69 227.78 L356.02 226.67 L361.35 225.58 L366.68 224.51 L372.02 223.45 L377.35 222.42 L382.68 221.40 L388.01 220.40 L393.35 219.42 L398.68 218.45 L404.01 217.49 L409.34 216.55 L414.68 215.63 L420.01 214.71 L425.34 213.81 L430.67 212.92 L436.01 212.05 L441.34 211.18 L446.67 210.32 L452.00 209.47 L457.34 208.64 L462.67 207.81 L468.00 206.99 L473.33 206.17 L478.67 205.37 L484.00 204.57 L489.33 203.78 L494.66 203.00 L500.00 202.22 L505.33 201.45 L510.66 200.68 L516.00 199.92 L521.33 199.17 L526.66 198.42 L531.99 197.68 L537.32 196.94 L542.66 196.20 L547.99 195.47 L553.32 194.74 L558.65 194.02 L563.99 193.30 L569.32 192.58 L574.65 191.87 L579.98 191.16 L585.32 190.45 L590.65 189.75 L595.98 189.05 L601.31 188.35 L606.65 187.65 L611.98 186.96 L617.31 186.27 L622.64 185.58 L627.98 184.89 L633.31 184.20 L638.64 183.52 L643.97 182.84 L649.31 182.16 L654.64 181.48 L659.97 180.80 L665.30 180.12 L670.64 179.45 L675.97 178.78 L681.30 178.10 L686.63 177.43 L691.97 176.76 L697.30 176.09 L702.63 175.42 L707.96 174.76 L713.30 174.09 L718.63 173.43 L723.96 172.76 L729.29 172.10 L734.63 171.43 L739.96 170.77 L745.29 170.11 L750.62 169.45 L755.96 168.79 L761.29 168.13 L766.62 167.47 L771.95 166.81 L777.29 166.15 L782.62 165.49 L787.95 164.84 L793.28 164.18 L798.62 163.52 L803.95 162.86 L809.28 162.21 L814.61 161.55 L819.95 160.90 L825.28 160.24" stroke="#c890c4" stroke-width="1.5" fill="none"/>
<path d="M64.5 375.0 L103.8 361.5 L143.6 346.5 L193.2 312.6 L254.3 294.6 L279.9 288.0 L296.9 294.9 L323.3 291.9 L375.8 279.8 L455.5 249.8 L461.9 253.4"  stroke="#3c86d0" stroke-width="1" fill="none"/>
<rect x="62.4" y="372.9" width="4.2" height="4.2" fill="#fff" stroke="#143c82" stroke-width="1.9"/>
<rect x="101.7" y="359.4" width="4.2" height="4.2" fill="#fff" stroke="#143c82" stroke-width="1.9"/>
<rect x="141.5" y="344.4" width="4.2" height="4.2" fill="#fff" stroke="#143c82" stroke-width="1.9"/>
<rect x="191.1" y="310.5" width="4.2" height="4.2" fill="#fff" stroke="#143c82" stroke-width="1.9"/>
<rect x="252.2" y="292.5" width="4.2" height="4.2" fill="#fff" stroke="#143c82" stroke-width="1.9"/>
<rect x="277.8" y="285.9" width="4.2" height="4.2" fill="#fff" stroke="#143c82" stroke-width="1.9"/>
<rect x="294.8" y="292.8" width="4.2" height="4.2" fill="#fff" stroke="#143c82" stroke-width="1.9"/>
<rect x="321.2" y="289.8" width="4.2" height="4.2" fill="#fff" stroke="#143c82" stroke-width="1.9"/>
<rect x="373.7" y="277.7" width="4.2" height="4.2" fill="#fff" stroke="#143c82" stroke-width="1.9"/>
<rect x="453.4" y="247.7" width="4.2" height="4.2" fill="#fff" stroke="#143c82" stroke-width="1.9"/>
<rect x="459.8" y="251.3" width="4.2" height="4.2" fill="#fff" stroke="#143c82" stroke-width="1.9"/>
<g font-family="Liberation Sans" font-size="9.3" fill="#505050" stroke="#505050" stroke-width="0.18"><text x="53.7" y="427.20" text-anchor="end">0</text><text x="53.7" y="392.82" text-anchor="end">5</text><text x="53.7" y="358.45" text-anchor="end">10</text><text x="53.7" y="324.07" text-anchor="end">15</text><text x="53.7" y="289.70" text-anchor="end">20</text><text x="53.7" y="255.32" text-anchor="end">25</text><text x="53.7" y="220.95" text-anchor="end">30</text><text x="53.7" y="186.57" text-anchor="end">35</text><text x="53.7" y="152.20" text-anchor="end">40</text><text x="79.03" y="437.3" text-anchor="middle">1</text><text x="100.36" y="437.3" text-anchor="middle">2</text><text x="121.69" y="437.3" text-anchor="middle">3</text><text x="143.02" y="437.3" text-anchor="middle">4</text><text x="164.35" y="437.3" text-anchor="middle">5</text><text x="185.68" y="437.3" text-anchor="middle">6</text><text x="207.01" y="437.3" text-anchor="middle">7</text><text x="228.34" y="437.3" text-anchor="middle">8</text><text x="249.67" y="437.3" text-anchor="middle">9</text><text x="271.00" y="437.3" text-anchor="middle">10</text><text x="292.33" y="437.3" text-anchor="middle">11</text><text x="313.66" y="437.3" text-anchor="middle">12</text><text x="334.99" y="437.3" text-anchor="middle">13</text><text x="356.32" y="437.3" text-anchor="middle">14</text><text x="377.65" y="437.3" text-anchor="middle">15</text><text x="398.98" y="437.3" text-anchor="middle">16</text><text x="420.31" y="437.3" text-anchor="middle">17</text><text x="441.64" y="437.3" text-anchor="middle">18</text><text x="462.97" y="437.3" text-anchor="middle">19</text><text x="484.30" y="437.3" text-anchor="middle">20</text><text x="505.63" y="437.3" text-anchor="middle">21</text><text x="526.96" y="437.3" text-anchor="middle">22</text><text x="548.29" y="437.3" text-anchor="middle">23</text><text x="569.62" y="437.3" text-anchor="middle">24</text><text x="590.95" y="437.3" text-anchor="middle">25</text><text x="612.28" y="437.3" text-anchor="middle">26</text><text x="633.61" y="437.3" text-anchor="middle">27</text><text x="654.94" y="437.3" text-anchor="middle">28</text><text x="676.27" y="437.3" text-anchor="middle">29</text><text x="697.60" y="437.3" text-anchor="middle">30</text><text x="718.93" y="437.3" text-anchor="middle">31</text><text x="740.26" y="437.3" text-anchor="middle">32</text><text x="761.59" y="437.3" text-anchor="middle">33</text><text x="782.92" y="437.3" text-anchor="middle">34</text><text x="804.25" y="437.3" text-anchor="middle">35</text><text x="825.58" y="437.3" text-anchor="middle">36</text></g>
<rect x="751.5" y="325.5" width="74.5" height="95.5" fill="#c4fcfc" />
<g font-family="Liberation Sans" font-size="9.4" fill="#4a5656" stroke="#4a5656" stroke-width="0.15"><rect x="753.5" y="327.30" width="8" height="8" fill="#1a6fe0" stroke="#ccc" stroke-width="0.5"/><text x="763" y="334.70" textLength="53.8" lengthAdjust="spacingAndGlyphs">Patient Values</text><rect x="753.5" y="339.33" width="8" height="8" fill="#f07020" stroke="#ccc" stroke-width="0.5"/><text x="763" y="346.73" textLength="53.4" lengthAdjust="spacingAndGlyphs">5rd Percentile</text><rect x="753.5" y="351.36" width="8" height="8" fill="#8c7070" stroke="#ccc" stroke-width="0.5"/><text x="763" y="358.76" textLength="58.4" lengthAdjust="spacingAndGlyphs">10th Percentile</text><rect x="753.5" y="363.39" width="8" height="8" fill="#806018" stroke="#ccc" stroke-width="0.5"/><text x="763" y="370.79" textLength="58.4" lengthAdjust="spacingAndGlyphs">25th Percentile</text><rect x="753.5" y="375.42" width="8" height="8" fill="#007a10" stroke="#ccc" stroke-width="0.5"/><text x="763" y="382.82" textLength="58.4" lengthAdjust="spacingAndGlyphs">50th Percentile</text><rect x="753.5" y="387.45" width="8" height="8" fill="#6a0a80" stroke="#ccc" stroke-width="0.5"/><text x="763" y="394.85" textLength="58.4" lengthAdjust="spacingAndGlyphs">75th Percentile</text><rect x="753.5" y="399.48" width="8" height="8" fill="#30d8b0" stroke="#ccc" stroke-width="0.5"/><text x="763" y="406.88" textLength="58.4" lengthAdjust="spacingAndGlyphs">90th Percentile</text><rect x="753.5" y="411.51" width="8" height="8" fill="#f0609a" stroke="#ccc" stroke-width="0.5"/><text x="763" y="418.91" textLength="58.4" lengthAdjust="spacingAndGlyphs">95th Percentile</text></g>
</svg>
<div class="abs" style="left:36px;top:457px;width:802px;height:1px;background:#e2e2e2"></div>
<div class="abs" id="thead"></div>
<div class="abs" style="left:36px;top:458px;width:802px;height:1px;background:#242424"></div>
<div class="sep" style="left:141px"></div>
<div class="sep" style="left:259.5px"></div>
<div class="sep" style="left:440.5px"></div>
<div class="sep" style="left:614px"></div>
<svg class="abs" style="left:0;top:0" width="873" height="480">
<g font-family="Liberation Sans"><text x="34.60" y="43.20" font-size="10.9" font-weight="bold" fill="#fff" stroke="#fff" stroke-width="0.35" textLength="101.80" lengthAdjust="spacingAndGlyphs">WELLNESS TRACKER</text><text x="781.50" y="42.80" font-size="9.4" font-weight="bold" fill="#fff" stroke="#fff" stroke-width="0.35" textLength="52.20" lengthAdjust="spacingAndGlyphs">ADD RESULT</text><text x="53.30" y="80.40" font-size="9.6" font-weight="bold" fill="#fff" stroke="#fff" stroke-width="0.25" textLength="18.90" lengthAdjust="spacingAndGlyphs">Print</text><text x="102.00" y="80.70" font-size="9.9" font-weight="normal" fill="#333" textLength="30.90" lengthAdjust="spacingAndGlyphs">Go back</text><text x="762.80" y="80.80" font-size="9.4" font-weight="bold" fill="#fff" stroke="#fff" stroke-width="0.35" textLength="58.40" lengthAdjust="spacingAndGlyphs">ADD DEVICES</text><text x="46.50" y="115.50" font-size="10.3" font-weight="normal" fill="#464646" stroke="#464646" stroke-width="0.3" textLength="77.50" lengthAdjust="spacingAndGlyphs">Wellness Tracker</text><text x="148.70" y="115.70" font-size="11.0" font-weight="bold" fill="#333" textLength="64.60" lengthAdjust="spacingAndGlyphs">Growth Chart</text><text x="41.80" y="475.60" font-size="12.3" font-weight="bold" fill="#fff" stroke="#fff" stroke-width="0.2" textLength="28.90" lengthAdjust="spacingAndGlyphs">Select</text><text x="148.60" y="475.60" font-size="12.3" font-weight="bold" fill="#fff" stroke="#fff" stroke-width="0.2" textLength="18.90" lengthAdjust="spacingAndGlyphs">Test</text><text x="267.00" y="475.60" font-size="12.3" font-weight="bold" fill="#fff" stroke="#fff" stroke-width="0.2" textLength="59.20" lengthAdjust="spacingAndGlyphs">Result/Units</text><text x="447.50" y="475.60" font-size="12.3" font-weight="bold" fill="#fff" stroke="#fff" stroke-width="0.2" textLength="22.70" lengthAdjust="spacingAndGlyphs">Date</text><text x="621.00" y="475.60" font-size="12.3" font-weight="bold" fill="#fff" stroke="#fff" stroke-width="0.2" textLength="36.00" lengthAdjust="spacingAndGlyphs">Actions</text></g>
<circle cx="144.05" cy="38.95" r="5.2" fill="#fff"/>
<path d="M142 37.3C142 35.4 146.2 35.4 146.2 37.4C146.2 38.8 144.1 38.9 144.1 40.4" fill="none" stroke="#0a4f8e" stroke-width="1.5"/><rect x="143.3" y="41.2" width="1.6" height="1.5" fill="#0a4f8e"/>
<path d="M835.8 39.25H842.9M839.35 35.9V42.6" stroke="#fff" stroke-width="2"/>
<path d="M823 77.4H830.1M826.55 74.1V80.8" stroke="#fff" stroke-width="2"/>
<rect x="44.9" y="74.0" width="3.8" height="2.6" fill="none" stroke="#fff" stroke-width="0.9"/>
<rect x="42.9" y="76.3" width="8" height="3.4" rx="0.9" fill="#fff"/>
<rect x="44.8" y="78.9" width="4.2" height="2.3" fill="#5ab4f8" stroke="#fff" stroke-width="0.9"/>
<path d="M91 76.4L95.1 73.3V75.0C98.6 75.0 100.3 77.3 99.9 80.5C98.9 78.7 97.6 77.9 95.1 77.9V79.6Z" fill="#222"/>

</svg>
</body></html>
